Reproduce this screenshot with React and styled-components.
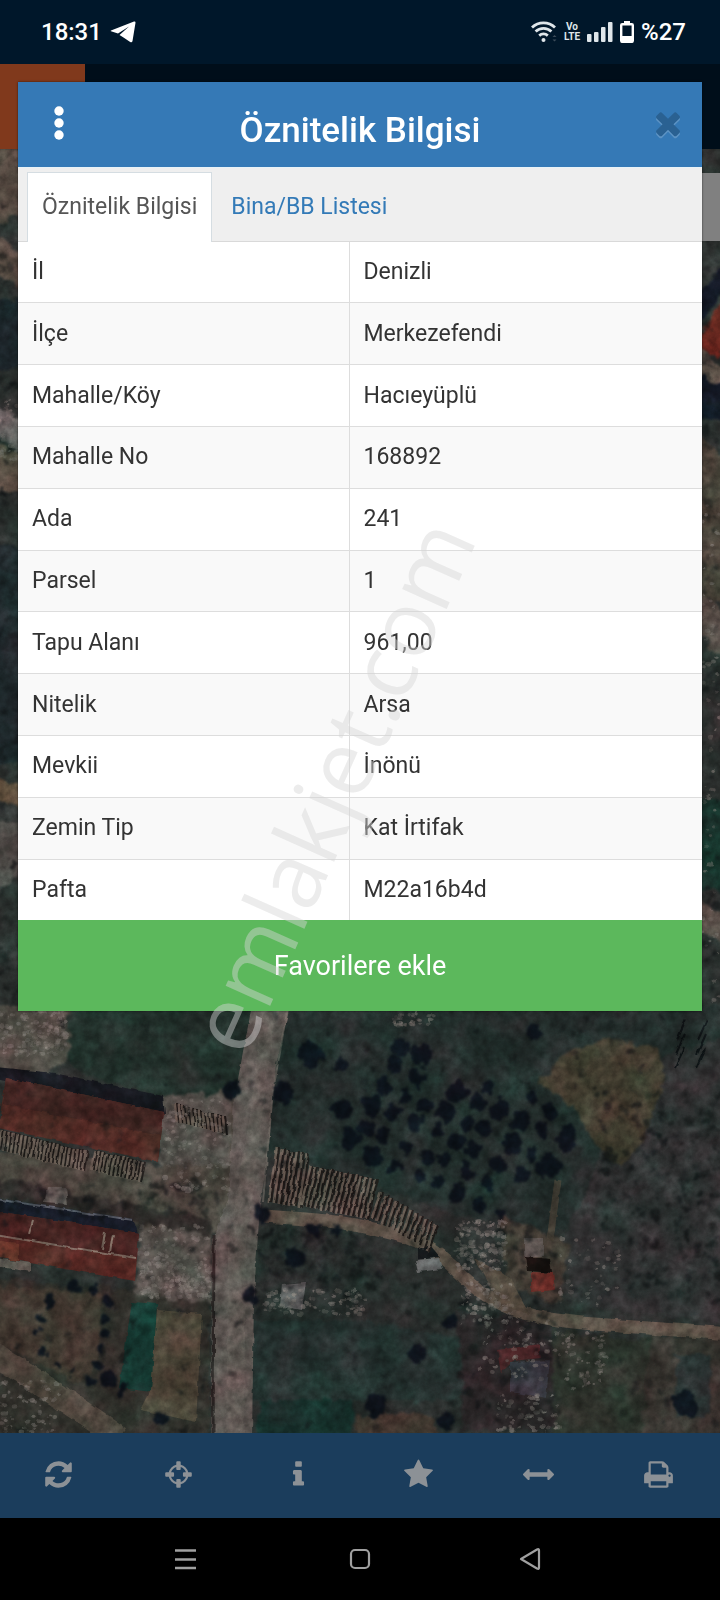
import React from 'react';
import styled, { createGlobalStyle } from 'styled-components';

const GlobalStyle = createGlobalStyle`
  * {
    box-sizing: border-box;
  }
  body {
    margin: 0;
    background: #000;
    color: #333;
    font-family: Roboto, 'Liberation Sans', sans-serif;
  }
  button {
    border: none;
    padding: 0;
    background: none;
    color: inherit;
    font: inherit;
    cursor: pointer;
  }
  svg {
    display: block;
  }
`;

const Screen = styled.div`
  position: relative;
  display: flex;
  flex-direction: column;
  min-height: 100vh;
  overflow: hidden;
`;

const StatusBar = styled.header`
  display: flex;
  align-items: center;
  justify-content: space-between;
  height: 64px;
  padding: 0 34px 0 41px;
  background: #00172a;
  color: #fff;
  font-size: 24px;
  font-weight: 500;
`;

const StatusGroup = styled.div`
  display: flex;
  align-items: center;
  gap: ${({ $gap }) => $gap}px;
`;

const VoLte = styled.span`
  color: #dfe6ea;
  font-size: 10px;
  font-weight: 700;
  line-height: 10px;
  text-align: center;
`;

const AppBar = styled.div`
  height: 85px;
  background: #000e1a;
`;

const MenuTile = styled.div`
  width: 85px;
  height: 100%;
  background: #80391c;
`;

const MapArea = styled.main`
  position: relative;
  flex: 1;
  overflow: hidden;
  background: #2b2e2c;
  .map__canvas {
    position: absolute;
    inset: 0;
    width: 100%;
    height: 100%;
  }
  .map__layer {
    position: absolute;
    top: 24px;
    right: 0;
    width: 60px;
    height: 68px;
    background: #808080;
  }
`;

const Toolbar = styled.nav`
  display: grid;
  grid-template-columns: repeat(6, 1fr);
  height: 85px;
  background: #1b3d5c;
  color: #8c9196;
`;

const ToolButton = styled.button`
  display: flex;
  align-items: center;
  justify-content: center;
  padding: 0 4px 2px 0;
`;

const SystemNav = styled.nav`
  display: flex;
  align-items: center;
  justify-content: center;
  gap: 148px;
  height: 82px;
  background: #000;
  color: #a0a0a0;
`;

const Dialog = styled.section`
  position: absolute;
  top: 82px;
  left: 18px;
  right: 18px;
  background: #fff;
  box-shadow: 0 0 2px rgba(0, 0, 0, 0.6);
`;

const DialogHeader = styled.div`
  display: grid;
  grid-template-columns: 80px 1fr 80px;
  height: 85px;
  background: #3579b6;
  color: #fff;
`;

const HeaderButton = styled.button`
  display: flex;
  align-items: center;
  justify-content: center;
  height: 82px;
  padding-left: ${({ $muted }) => ($muted ? 12 : 2)}px;
  color: ${({ $muted }) => ($muted ? '#2a6192' : '#fff')};
  svg {
    filter: ${({ $muted }) =>
      $muted ? 'drop-shadow(0 2px 0 rgba(255, 255, 255, 0.2))' : 'none'};
  }
`;

const Title = styled.h1`
  margin: 0;
  padding-top: 29px;
  font-size: 35px;
  font-weight: 500;
  line-height: 40px;
  text-align: center;
`;

const Tabs = styled.div`
  display: flex;
  align-items: flex-end;
  height: 75px;
  padding: 0 9px;
  background: #efefef;
  border-top: 1px solid #e8f2f7;
  border-bottom: 1px solid #d9d9d9;
`;

const Tab = styled.button`
  height: 70px;
  margin-bottom: -1px;
  padding: 0 ${({ $active }) => ($active ? 14 : 18)}px 2px;
  border: 1px solid ${({ $active }) => ($active ? '#d5dde2' : 'transparent')};
  border-bottom: none;
  background: ${({ $active }) => ($active ? '#fff' : 'transparent')};
  color: ${({ $active }) => ($active ? '#555' : '#337ab7')};
  font-size: 23px;
`;

const InfoTable = styled.table`
  width: 100%;
  height: 678px;
  border-collapse: collapse;
  table-layout: fixed;
  font-size: 23px;
  line-height: 32px;
  tr:nth-child(even) {
    background: #f9f9f9;
  }
  tr + tr {
    border-top: 1px solid #ddd;
  }
  th,
  td {
    padding: 0 14px;
    font-weight: 400;
    text-align: left;
  }
  th {
    width: 331px;
    border-right: 1px solid #ddd;
  }
`;

const FavoriteButton = styled.button`
  display: block;
  width: 100%;
  height: 91px;
  background: #5cb85c;
  color: #fff;
  font-size: 27px;
`;

const Watermark = styled.div`
  position: absolute;
  top: 785px;
  left: 330px;
  color: #d6d6d6;
  font-family: 'Open Sans', 'Noto Sans', sans-serif;
  font-size: 91px;
  font-weight: 500;
  line-height: 120px;
  opacity: 0.45;
  pointer-events: none;
  transform: translate(-50%, -50%) rotate(-66deg);
`;

const rows = [
  ['İl', 'Denizli'],
  ['İlçe', 'Merkezefendi'],
  ['Mahalle/Köy', 'Hacıeyüplü'],
  ['Mahalle No', '168892'],
  ['Ada', '241'],
  ['Parsel', '1'],
  ['Tapu Alanı', '961,00'],
  ['Nitelik', 'Arsa'],
  ['Mevkii', 'İnönü'],
  ['Zemin Tip', 'Kat İrtifak'],
  ['Pafta', 'M22a16b4d'],
];

const tools = [
  {
    label: 'Yenile',
    path: 'M1639 928q0 5-1 7-64 268-268 434.5T892 1536q-146 0-282.5-55T366 1324l-129 129q-19 19-45 19t-45-19-19-45V960q0-26 19-45t45-19h448q26 0 45 19t19 45-19 45l-137 137q71 66 161 102t187 36q134 0 250-65t186-179q11-17 53-117 8-23 30-23h192q13 0 22.5 9.5t9.5 22.5zm25-800v448q0 26-19 45t-45 19h-448q-26 0-45-19t-19-45 19-45l138-138Q1097 256 896 256q-134 0-250 65T460 500q-11 17-53 117-8 23-30 23H178q-13 0-22.5-9.5T146 608v-7q65-268 270-434.5T896 0q146 0 284 55.5T1425 212l130-129q19-19 45-19t45 19 19 45z',
    shift: 128,
  },
  {
    label: 'Konum',
    path: 'M1325 1024h-109q-26 0-45-19t-19-45v-128q0-26 19-45t45-19h109q-32-108-112.5-188.5T1024 467v109q0 26-19 45t-45 19H832q-26 0-45-19t-19-45V467q-108 32-188.5 112.5T467 768h109q26 0 45 19t19 45v128q0 26-19 45t-45 19H467q32 108 112.5 188.5T768 1325v-109q0-26 19-45t45-19h128q26 0 45 19t19 45v109q108-32 188.5-112.5T1325 1024zm339-192v128q0 26-19 45t-45 19h-143q-37 161-154.5 278.5T1024 1457v143q0 26-19 45t-45 19H832q-26 0-45-19t-19-45v-143q-161-37-278.5-154.5T335 1024H192q-26 0-45-19t-19-45V832q0-26 19-45t45-19h143q37-161 154.5-278.5T768 335V192q0-26 19-45t45-19h128q26 0 45 19t19 45v143q161 37 278.5 154.5T1457 768h143q26 0 45 19t19 45z',
  },
  {
    label: 'Bilgi',
    path: 'M1216 1344v128q0 26-19 45t-45 19H640q-26 0-45-19t-19-45v-128q0-26 19-45t45-19h64V896h-64q-26 0-45-19t-19-45V704q0-26 19-45t45-19h384q26 0 45 19t19 45v576h64q26 0 45 19t19 45zm-128-1152v192q0 26-19 45t-45 19H768q-26 0-45-19t-19-45V192q0-26 19-45t45-19h256q26 0 45 19t19 45z',
  },
  {
    label: 'Favoriler',
    path: 'M1728 647q0 22-26 48l-363 354 86 500q1 7 1 20 0 21-10.5 35.5T1385 1619q-19 0-40-12l-449-236-449 236q-22 12-40 12-21 0-31.5-14.5T365 1569q0-6 2-20l86-500L89 695q-25-27-25-48 0-37 56-46l502-73 225-455q19-41 49-41t49 41l225 455 502 73q56 9 56 46z',
  },
  {
    label: 'Ölçüm',
    path: 'M1792 896q0 26-19 45l-256 256q-19 19-45 19t-45-19-19-45v-128H384v128q0 26-19 45t-45 19-45-19L19 941Q0 922 0 896t19-45l256-256q19-19 45-19t45 19 19 45v128h1024V640q0-26 19-45t45-19 45 19l256 256q19 19 19 45z',
  },
  {
    label: 'Yazdır',
    path: 'M448 1536h896v-256H448v256zm0-640h896V512h-160q-40 0-68-28t-28-68V256H448v640zm1152 64q0-26-19-45t-45-19-45 19-19 45 19 45 45 19 45-19 19-45zm128 0v416q0 13-9.5 22.5t-22.5 9.5h-224v160q0 40-28 68t-68 28H416q-40 0-68-28t-28-68v-160H96q-13 0-22.5-9.5T64 1376V960q0-79 56.5-135.5T256 768h64V224q0-40 28-68t68-28h672q40 0 88 20t76 48l152 152q28 28 48 76t20 88v256h64q79 0 135.5 56.5T1728 960z',
  },
];

const closePath =
  'M1490 1322q0 40-28 68l-136 136q-28 28-68 28t-68-28l-294-294-294 294q-28 28-68 28t-68-28l-136-136q-28-28-28-68t28-68l294-294-294-294q-28-28-28-68t28-68l136-136q28-28 68-28t68 28l294 294 294-294q28-28 68-28t68 28l136 136q28 28 28 68t-28 68l-294 294 294 294q28 28 28 68z';

const Glyph = ({ path, size = 31, shift = 0 }) => (
  <svg width={size} height={size} viewBox="0 0 1792 1792" fill="currentColor" overflow="visible">
    <path d={path} transform={`translate(0 ${shift})`} />
  </svg>
);

// small seeded generator so the scattered stones stay put between renders
const scatter = (seed, count, x, y, w, h) => {
  let s = seed;
  const next = () => {
    s = (s * 16807) % 2147483647;
    return s / 2147483647;
  };
  return Array.from({ length: count }, () => ({
    x: x + next() * w,
    y: y + next() * h,
    r: 1 + next() * 2,
    o: 0.3 + next() * 0.6,
  }));
};

const orchard = [
  [383, 1085, 9], [372, 1103, 11], [405, 1096, 7], [414, 1077, 10], [424, 1103, 8],
  [445, 1110, 11], [393, 1113, 9], [414, 1122, 9], [436, 1131, 8], [456, 1091, 10],
  [488, 1087, 7], [477, 1100, 9], [498, 1108, 10], [467, 1124, 8], [484, 1127, 9],
  [519, 1120, 10], [531, 1097, 7], [541, 1129, 8], [511, 1143, 11], [530, 1153, 8],
  [456, 1141, 9], [472, 1149, 8], [444, 1160, 8], [427, 1155, 8], [404, 1146, 8],
  [382, 1135, 7], [365, 1128, 9], [371, 1155, 11], [394, 1165, 7], [418, 1174, 6],
  [466, 1172, 10], [498, 1164, 10], [521, 1173, 8], [486, 1182, 7], [437, 1182, 8],
  [456, 1192, 9], [476, 1204, 8], [548, 1165, 12], [565, 1138, 12], [549, 1110, 8],
  [420, 1054, 11], [400, 1046, 10], [393, 1064, 9], [340, 1108, 10], [349, 1138, 11],
  [310, 1054, 14], [282, 1092, 11], [341, 1065, 8], [500, 1214, 6], [450, 1320, 9],
  [416, 1353, 10], [375, 1405, 11], [445, 1420, 9], [685, 1402, 13],
  [293, 1257, 10], [312, 1228, 7], [261, 1213, 9], [335, 1228, 6],
  [535, 1032, 8], [230, 1090, 9], [249, 1295, 9], [48, 1302, 6], [42, 1317, 5],
  [35, 1330, 5], [107, 1302, 6], [104, 1317, 5], [104, 1332, 5], [99, 1348, 5],
  [96, 1365, 5], [89, 1380, 5], [106, 1378, 8], [58, 1361, 4], [42, 1351, 4],
  [73, 1370, 4], [72, 1287, 7], [92, 1290, 6], [122, 1389, 6], [160, 1419, 9],
];

const stones = [
  ...scatter(11, 160, 0, 1011, 66, 44),
  ...scatter(23, 150, 140, 1262, 70, 36),
  ...scatter(37, 130, 165, 1100, 64, 90),
  ...scatter(41, 140, 456, 1220, 50, 50),
  ...scatter(53, 90, 462, 1280, 50, 45),
  ...scatter(67, 60, 480, 1320, 70, 60),
  ...scatter(71, 60, 555, 1330, 50, 60),
  ...scatter(83, 60, 498, 1395, 60, 38),
  ...scatter(97, 90, 265, 1290, 100, 26),
  ...scatter(101, 40, 560, 1235, 60, 70),
  ...scatter(103, 30, 395, 1012, 40, 14),
  ...scatter(107, 70, 0, 1380, 60, 53),
  ...scatter(109, 40, 0, 400, 18, 60),
  ...scatter(113, 60, 702, 500, 18, 500),
  ...scatter(127, 60, 140, 1225, 70, 40),
];

const darkSpecks = [
  ...scatter(131, 300, 0, 1011, 720, 422),
  ...scatter(137, 240, 600, 1090, 120, 210),
  ...scatter(139, 120, 460, 1230, 100, 180),
  ...scatter(149, 90, 0, 1180, 220, 40),
  ...scatter(151, 70, 0, 149, 18, 860),
  ...scatter(157, 70, 702, 241, 18, 770),
  ...scatter(163, 120, 260, 1225, 120, 70),
];

const logRows = [
  { x: 2, y: 1130, n: 22, dx: 4, dy: 1, len: 20, lean: -3 },
  { x: 95, y: 1150, n: 13, dx: 4, dy: 1, len: 20, lean: -4 },
  { x: 175, y: 1104, n: 13, dx: 4, dy: 1, len: 18, lean: 2 },
  { x: 277, y: 1148, n: 7, dx: 5, dy: 1, len: 54, lean: -8 },
  { x: 311, y: 1166, n: 14, dx: 5, dy: 1, len: 40, lean: -10 },
  { x: 381, y: 1192, n: 12, dx: 5, dy: 3, len: 26, lean: -9 },
];

const SatelliteMap = () => (
  <svg className="map__canvas" viewBox="0 149 720 1284" preserveAspectRatio="xMidYMin slice" aria-hidden="true">
    <defs>
      <filter id="rough" x="0" y="0" width="100%" height="100%" colorInterpolationFilters="sRGB">
        <feTurbulence type="fractalNoise" baseFrequency="0.09" numOctaves="3" seed="4" result="n" />
        <feDisplacementMap in="SourceGraphic" in2="n" scale="14" xChannelSelector="R" yChannelSelector="G" />
        <feGaussianBlur stdDeviation="1.2" />
      </filter>
      <filter id="edges" x="0" y="0" width="100%" height="100%" colorInterpolationFilters="sRGB">
        <feTurbulence type="fractalNoise" baseFrequency="0.1" numOctaves="2" seed="9" result="n" />
        <feDisplacementMap in="SourceGraphic" in2="n" scale="4" xChannelSelector="R" yChannelSelector="G" />
        <feGaussianBlur stdDeviation="0.7" />
      </filter>
      <filter id="grain" x="0" y="0" width="100%" height="100%" colorInterpolationFilters="sRGB">
        <feTurbulence type="fractalNoise" baseFrequency="0.12" numOctaves="4" seed="2" />
        <feColorMatrix values="1.4 0.6 0 0 -0.5  1.4 0.6 0 0 -0.5  1.4 0.6 0 0 -0.5  0 0 0 0 1" />
      </filter>
      <filter id="patches" x="0" y="0" width="100%" height="100%" colorInterpolationFilters="sRGB">
        <feTurbulence type="fractalNoise" baseFrequency="0.03" numOctaves="3" seed="7" />
        <feColorMatrix values="1.5 0.5 0 0 -0.5  0.8 1.2 0 0 -0.5  1 1 0 0 -0.5  0 0 0 0 1" />
      </filter>
    </defs>

    <rect y="149" width="720" height="1284" fill="#2b302e" />

    <g filter="url(#rough)">
      {/* strips beside the dialog */}
      <path d="M-10 149h40v60l-40 20z" fill="#554c43" />
      <path d="M-10 230l40 30v30l-40-20z" fill="#51483f" />
      <path d="M-10 300h40v70h-40z" fill="#1c2429" />
      <path d="M-10 400l40 25v30l-40-20z" fill="#696765" />
      <path d="M-10 440l40 20v30h-40z" fill="#584e43" />
      <path d="M-10 545h40v220h-40z" fill="#1e272a" />
      <path d="M-10 775l40 14v20l-40-8z" fill="#5c4c3a" />
      <path d="M-10 820l40 5v40l-40 30z" fill="#4c4a46" />
      <path d="M695 340l30-45v60h-30z" fill="#6b2820" />
      <path d="M695 300l30-36v24l-30 40z" fill="#10141f" />
      <path d="M695 345l30 26v30l-30-20z" fill="#655a50" />
      <path d="M695 372l30 16v30h-30z" fill="#111722" />
      <path d="M695 430l30 34v140h-30z" fill="#484037" />
      <path d="M695 585l30 30v40l-30-20z" fill="#524943" />
      <path d="M695 800h30v90h-30z" fill="#173029" />
      <path d="M695 895l30 20v30l-30-15z" fill="#544943" />

      {/* fields */}
      <path d="M-10 1005h80l-2 55-30 16-48-8z" fill="#4f4b44" />
      <path d="M66 1005h190l-18 100-78-8-90-28z" fill="#222f2a" />
      <path d="M275 1005h450v110l-110 70-60 50-100-20-110-40-80-25z" fill="#232d2b" />
      <path d="M620 1070l110-35v290l-150-20-20-60 34-70z" fill="#2f3131" />
      <path d="M538 1082l30-30 40-14 50 12 6 32-22 62-20 22-22-14-24-42z" fill="#403b2e" />
      <path d="M262 1225l90 10 70 30 50 70-10 98H250z" fill="#282e2c" />
      <path d="M250 1320h110l110 20-10 60H250z" fill="#24302e" />
      <path d="M258 1400h95v40h-95z" fill="#162f2a" />
      <path d="M356 1415h80v25h-80z" fill="#3f362e" />
      <path d="M550 1330l100 10-10 100h-90z" fill="#2d322b" />
      <path d="M650 1335h80v110h-90z" fill="#37342f" />
      <path d="M676 1355h34v60h-34z" fill="#283130" />
      <path d="M500 1215l70 30-12 60-50-20z" fill="#443d35" />
      <path d="M455 1310l95 10 5 110h-90z" fill="#2a2627" />
      <path d="M-10 1278l220 18v150H-10z" fill="#302f2a" />
      <path d="M-10 1285l112 8-4 70-20 20-60-30-34-12z" fill="#40372f" />

      {/* yard between the sheds */}
      <path d="M-10 1150l170 18 60-80 20 10v140l-90-10-160-40z" fill="#4b453e" />
      <path d="M160 1095h70v70h-70z" fill="#524e49" />
      <path d="M140 1225l72 8v70l-78-8z" fill="#524d48" />
      <path d="M-10 1178l220 42v14l-220-38z" fill="#2e2a28" />
    </g>

    <g filter="url(#edges)">
      {/* roads */}
      <path d="M252 1005h38l-14 60-8 90-8 50-6 90-2 145h-41l1-200 16-40 6-100z" fill="#5a534f" />
      <path d="M262 1005h14l-16 130-14 110-2 190h-18l2-190 22-130z" fill="#645d58" opacity=".6" />
      <path d="M287 1011l-14 80-10 110" fill="none" stroke="#6e6761" strokeWidth="2" opacity=".6" />
      <path d="M214 1235l-1 200" stroke="#2a2423" strokeWidth="3" />
      <path
        d="M264 1216c50 4 80 4 130 18 50 12 60 40 90 60s60 26 110 30l136 10"
        fill="none"
        stroke="#5a4f45"
        strokeWidth="13"
      />
      <path d="M474 1258l36 20 20 36-30-8z" fill="#50463b" />
      <path d="M-10 1352c40 24 70 44 130 86" fill="none" stroke="#4e463d" strokeWidth="24" />
      <path d="M558 1180l-8 60" stroke="#4c4438" strokeWidth="7" opacity=".7" />

      {/* sports ground */}
      <path d="M132 1302l25 2-5 88-33-4z" fill="#153730" />
      <path d="M157 1310l45 4-6 108-55-12 10-20z" fill="#4c4437" />

      {/* sheds */}
      <path d="M-5 1067l60 6 108 23 2 18-165-34z" fill="#15171d" />
      <path d="M6 1078l158 34-6 50-160-34z" fill="#4f2a24" />
      <path d="M6 1078l158 34-3 24-158-32z" fill="#422522" />
      <path d="M-5 1198l138 21 5 14-143-22z" fill="#181d29" />
      <path d="M-5 1199l138 21" stroke="#555b64" strokeWidth="2" />
      <path d="M-5 1211l144 22-4 48-140-24z" fill="#542823" />
      <path d="M-5 1211l144 22-2 25-142-24z" fill="#43211f" />
      <path d="M-5 1235l141 23M33 1220l-4 14M105 1232l-3 18M113 1234l-3 18" stroke="#7a675d" strokeWidth="2" fill="none" />
      <path d="M-5 1240l24 4v17l-24-4z" fill="#66362a" />
      <path d="M-5 1258l36 5v9l-36-6z" fill="#625c55" />

      {/* houses */}
      <path d="M418 1249l12-4 10 12-22 3z" fill="#14181a" />
      <path d="M415 1260l24-2 3 11-24 3z" fill="#626464" />
      <path d="M526 1256l24 3 2 14-24-2z" fill="#16110f" />
      <path d="M524 1238h20v18h-20z" fill="#5a534f" />
      <path d="M531 1272l22 1 2 17-24 2z" fill="#6c302a" />
      <path d="M497 1350l42-6 2 14-28 3-12 12z" fill="#4a2527" />
      <path d="M510 1362l40-2-4 38-36-6z" fill="#35353d" />
      <path d="M282 1284l24-2-4 28-22-4z" fill="#5c5c5c" />
      <path d="M48 1187h18l2 18-24-2z" fill="#605c57" />

      {/* stacked logs */}
      {logRows.map(({ x, y, n, dx, dy, len, lean }) =>
        Array.from({ length: n }, (_, i) => (
          <g key={`${x}-${i}`}>
            <path d={`M${x + i * dx} ${y + i * dy}l${lean} ${len}`} stroke="#62574e" strokeWidth="3" />
            <path d={`M${x + 2 + i * dx} ${y + i * dy}l${lean} ${len}`} stroke="#1e1a18" strokeWidth="2" />
          </g>
        ))
      )}
      {[0, 1, 2, 3, 4, 5].map((i) => (
        <path key={i} d={`M${686 - (i % 3) * 8 + i * 7} ${1020 + (i % 3) * 14}l-9 20`} stroke="#0f1416" strokeWidth="2" />
      ))}
    </g>

    <g filter="url(#rough)">
      {darkSpecks.map((p, i) => (
        <circle key={i} cx={p.x} cy={p.y} r={p.r * 1.4} fill="#0f1314" opacity={p.o * 0.7} />
      ))}
      {orchard.map(([x, y, r]) => (
        <ellipse key={`${x}-${y}`} cx={x + 1} cy={y + 1} rx={r - 1} ry={r} fill="#0c1118" opacity=".95" />
      ))}
    </g>
    <g filter="url(#edges)">
      {stones.map((p, i) => (
        <ellipse key={i} cx={p.x} cy={p.y} rx={p.r} ry={p.r * 0.8} fill="#7c7570" opacity={p.o * 0.65} />
      ))}
    </g>

    <rect y="149" width="720" height="1284" filter="url(#patches)" opacity=".25" style={{ mixBlendMode: 'soft-light' }} />
    <rect y="149" width="720" height="1284" filter="url(#grain)" opacity=".2" style={{ mixBlendMode: 'overlay' }} />
  </svg>
);

const TelegramIcon = () => (
  <svg width="26" height="22" viewBox="0 0 26 22" fill="#fff" aria-hidden="true">
    <path d="M1 9.400L24 .6q1.600-.4 1.500 1.200L22.500 20q-.5 2-2.300 1l-6.700-4.500-4-2.600L19 5.500 8 12.400 1 10.300q-.8-.4 0-.9z" />
  </svg>
);

const WifiIcon = () => (
  <svg width="26" height="22" viewBox="0 0 26 22" fill="none" stroke="#dfe6ea" strokeWidth="2.800" aria-hidden="true">
    <path d="M1 6.500a16.500 16.500 0 0 1 23 0M4.600 10.600a11.500 11.500 0 0 1 15.800 0M8.200 14.600a6.600 6.600 0 0 1 8.600 0" />
    <circle cx="12.500" cy="19" r="2" fill="#dfe6ea" stroke="none" />
    <path d="M21.500 16l2-2 2 2zM21.500 18.500l2 2 2-2z" fill="#3c4c5a" stroke="none" />
  </svg>
);

const SignalIcon = () => (
  <svg width="26" height="22" viewBox="0 0 26 22" fill="#dfe6ea" aria-hidden="true">
    <rect y="13" width="4.500" height="8" rx="1" />
    <rect x="7" y="11" width="4.500" height="10" rx="1" />
    <rect x="14" y="6" width="4.500" height="15" rx="1" />
    <rect x="21" y="1" width="4.500" height="20" rx="1" />
  </svg>
);

const BatteryIcon = () => (
  <svg width="14" height="22" viewBox="0 0 14 22" aria-hidden="true">
    <rect x="4" width="6" height="3" fill="#fff" />
    <rect x="1.200" y="3.200" width="11.600" height="17.600" rx="1" fill="none" stroke="#fff" strokeWidth="2.400" />
    <rect x="1" y="15" width="12" height="6.500" fill="#fff" />
  </svg>
);

const App = () => (
  <>
    <GlobalStyle />
    <Screen>
      <StatusBar>
        <StatusGroup $gap={8}>
          <span>18:31</span>
          <TelegramIcon />
        </StatusGroup>
        <StatusGroup $gap={7}>
          <WifiIcon />
          <VoLte>
            Vo
            <br />
            LTE
          </VoLte>
          <SignalIcon />
          <BatteryIcon />
          <span>%27</span>
        </StatusGroup>
      </StatusBar>
      <AppBar>
        <MenuTile />
      </AppBar>
      <MapArea>
        <SatelliteMap />
        <div className="map__layer" />
      </MapArea>
      <Toolbar>
        {tools.map(({ label, path, shift }) => (
          <ToolButton key={label} type="button" aria-label={label}>
            <Glyph path={path} shift={shift} />
          </ToolButton>
        ))}
      </Toolbar>
      <SystemNav>
        <button type="button" aria-label="Son uygulamalar">
          <svg width="26" height="26" viewBox="0 0 26 26" stroke="currentColor" strokeWidth="2.500">
            <path d="M2 4.500h21M2 13.500h21M2 22h21" />
          </svg>
        </button>
        <button type="button" aria-label="Ana ekran">
          <svg width="26" height="26" viewBox="0 0 26 26" fill="none" stroke="currentColor" strokeWidth="2.200">
            <rect x="4" y="4" width="18" height="18" rx="4" />
          </svg>
        </button>
        <button type="button" aria-label="Geri">
          <svg width="26" height="26" viewBox="2 0 26 26" fill="none" stroke="currentColor" strokeWidth="2.200" strokeLinejoin="round" overflow="visible">
            <path d="M2 13L18 3.500q2-1 2 1v17q0 2-2 1z" />
          </svg>
        </button>
      </SystemNav>

      <Dialog role="dialog" aria-labelledby="dialog-title">
        <DialogHeader>
          <HeaderButton type="button" aria-label="Menü">
            <svg width="10" height="34" viewBox="0 0 10 34" fill="currentColor">
              <circle cx="5" cy="5" r="4.700" />
              <circle cx="5" cy="17" r="4.700" />
              <circle cx="5" cy="29" r="4.700" />
            </svg>
          </HeaderButton>
          <Title id="dialog-title">Öznitelik Bilgisi</Title>
          <HeaderButton type="button" $muted aria-label="Kapat">
            <Glyph path={closePath} size={36} />
          </HeaderButton>
        </DialogHeader>
        <Tabs role="tablist">
          <Tab type="button" role="tab" aria-selected="true" $active>
            Öznitelik Bilgisi
          </Tab>
          <Tab type="button" role="tab" aria-selected="false">
            Bina/BB Listesi
          </Tab>
        </Tabs>
        <InfoTable>
          <tbody>
            {rows.map(([name, value]) => (
              <tr key={name}>
                <th scope="row">{name}</th>
                <td>{value}</td>
              </tr>
            ))}
          </tbody>
        </InfoTable>
        <FavoriteButton type="button">Favorilere ekle</FavoriteButton>
      </Dialog>
      <Watermark>emlakjet.com</Watermark>
    </Screen>
  </>
);

export default App;
